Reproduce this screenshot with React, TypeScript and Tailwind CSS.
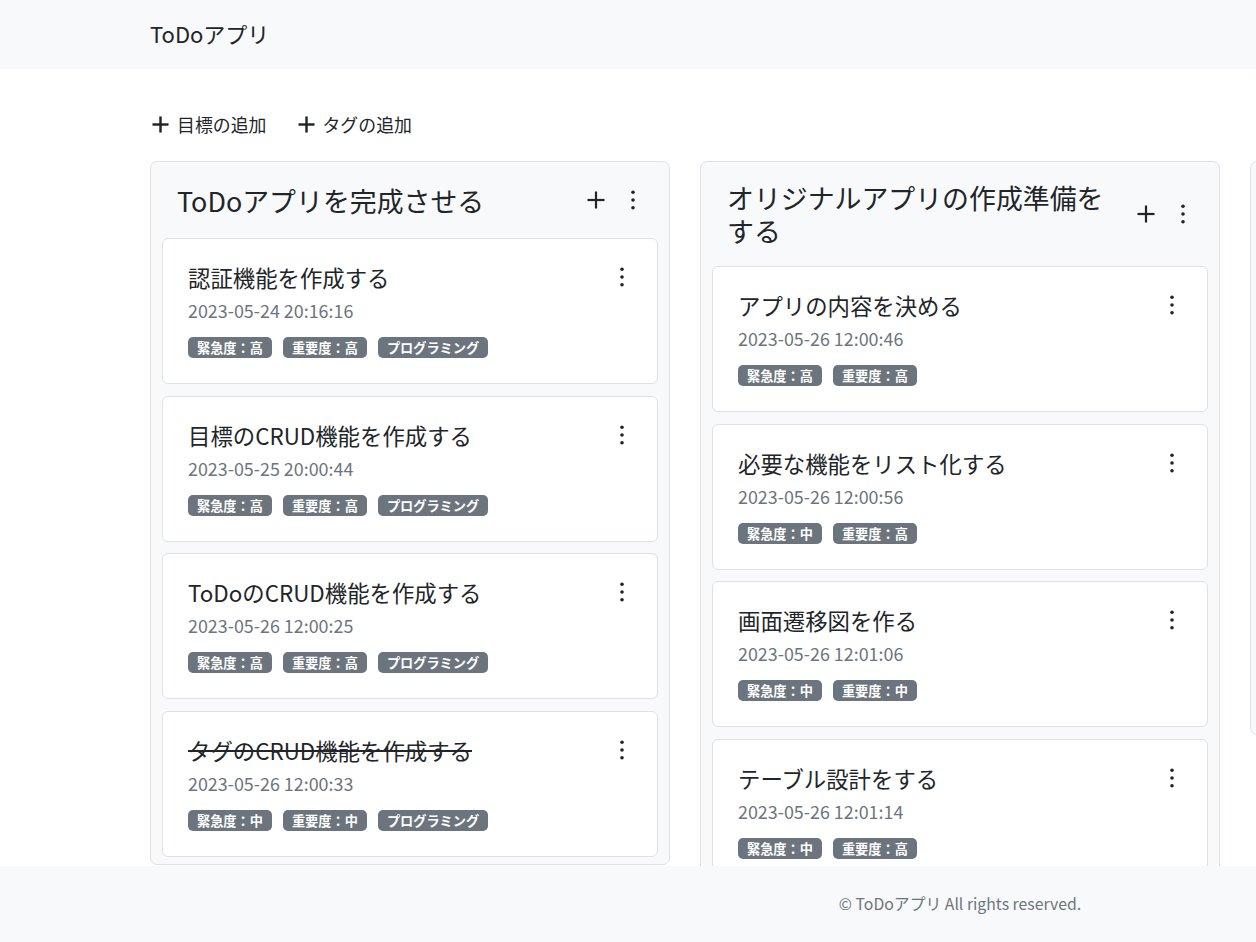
import React from "react";

type Task = { title: string; date: string; urgency: string; importance: string; tag?: string; done?: boolean };
type Goal = { title: string; tasks: Task[] };

const goals: Goal[] = [
  {
    title: "ToDoアプリを完成させる",
    tasks: [
      { title: "認証機能を作成する", date: "2023-05-24 20:16:16", urgency: "高", importance: "高", tag: "プログラミング" },
      { title: "目標のCRUD機能を作成する", date: "2023-05-25 20:00:44", urgency: "高", importance: "高", tag: "プログラミング" },
      { title: "ToDoのCRUD機能を作成する", date: "2023-05-26 12:00:25", urgency: "高", importance: "高", tag: "プログラミング" },
      { title: "タグのCRUD機能を作成する", date: "2023-05-26 12:00:33", urgency: "中", importance: "中", tag: "プログラミング", done: true },
    ],
  },
  {
    title: "オリジナルアプリの作成準備をする",
    tasks: [
      { title: "アプリの内容を決める", date: "2023-05-26 12:00:46", urgency: "高", importance: "高" },
      { title: "必要な機能をリスト化する", date: "2023-05-26 12:00:56", urgency: "中", importance: "高" },
      { title: "画面遷移図を作る", date: "2023-05-26 12:01:06", urgency: "中", importance: "中" },
      { title: "テーブル設計をする", date: "2023-05-26 12:01:14", urgency: "中", importance: "高" },
    ],
  },
  {
    title: "ポートフォリオサイトを公開する準備をする",
    tasks: [
      { title: "デザインを決める", date: "2023-05-26 12:01:30", urgency: "中", importance: "中" },
      { title: "サーバーを契約する", date: "2023-05-26 12:01:42", urgency: "低", importance: "中" },
      { title: "ドメインを取得する", date: "2023-05-26 12:01:55", urgency: "低", importance: "低" },
    ],
  },
];

function PlusIcon({ size = 18, stroke = 2.2 }: { size?: number; stroke?: number }) {
  return (
    <svg width={size} height={size} viewBox="0 0 18 18" fill="none" stroke="#212529" strokeWidth={stroke} strokeLinecap="butt">
      <line x1="9" y1="0.5" x2="9" y2="17.5" />
      <line x1="0.5" y1="9" x2="17.5" y2="9" />
    </svg>
  );
}

function KebabIcon() {
  return (
    <svg width="24" height="24" viewBox="0 0 24 24" fill="#212529">
      <circle cx="12" cy="4.3" r="1.8" />
      <circle cx="12" cy="12" r="1.8" />
      <circle cx="12" cy="19.7" r="1.8" />
    </svg>
  );
}

function Badge({ children }: { children: React.ReactNode }) {
  return (
    <span className="inline-flex h-[21px] items-center rounded-[5px] bg-[#6c757d] px-[9px] text-[13.2px] font-bold leading-[21px] text-white">
      {children}
    </span>
  );
}

function TaskCard({ task }: { task: Task }) {
  return (
    <div className="rounded-[6px] border border-[#dee2e6] bg-white pb-[25px] pl-[25px] pr-[24px] pt-[24px]">
      <div className="flex items-center justify-between">
        <div className={`text-[22.4px] leading-[28px] text-[#212529] ${task.done ? "line-through" : ""}`}>{task.title}</div>
        <button className="mr-[-1px] flex h-[28px] w-[24px] items-center justify-center">
          <KebabIcon />
        </button>
      </div>
      <div className="mt-[6px] text-[17.9px] leading-[26px] text-[#6c757d]">{task.date}</div>
      <div className="mt-[14px] flex gap-[11px]">
        <Badge>緊急度：{task.urgency}</Badge>
        <Badge>重要度：{task.importance}</Badge>
        {task.tag && <Badge>{task.tag}</Badge>}
      </div>
    </div>
  );
}

function GoalColumn({ goal }: { goal: Goal }) {
  return (
    <div className="w-[520px] shrink-0 rounded-[7px] border border-[#dee2e6] bg-[#f8f9fa] px-[11px] pb-[7px] pt-[19px]">
      <div className="flex items-center pl-[15px] pr-[13px]">
        <div className="mr-[20px] flex-1 text-[26.9px] leading-[33px] text-[#212529]">{goal.title}</div>
        <div className="flex h-[38px] items-center gap-[13px]">
          <button className="flex h-[38px] w-[24px] items-center justify-center">
            <PlusIcon size={18} stroke={2.2} />
          </button>
          <button className="flex h-[38px] w-[24px] items-center justify-center">
            <KebabIcon />
          </button>
        </div>
      </div>
      <div className="mt-[19px] flex flex-col gap-[11.5px]">
        {goal.tasks.map((t) => (
          <TaskCard key={t.title} task={t} />
        ))}
      </div>
    </div>
  );
}

export default function App() {
  return (
    <div className="relative h-[942px] w-full overflow-hidden bg-white font-['Noto_Sans_CJK_JP','Noto_Sans',sans-serif] text-[#212529]">
      <header className="flex h-[69px] items-center bg-[#f8f9fa] pb-[3px] pl-[150px]">
        <span className="text-[22px] leading-[30px] text-[#212529]">ToDoアプリ</span>
      </header>
      <main className="pl-[150px]">
        <div className="mt-[42px] flex h-[26px] items-center gap-[32px] pl-[2px]">
          <button className="flex items-center gap-[8px] text-[17.9px] leading-[26px]">
            <PlusIcon size={17} stroke={2.6} />
            <span>目標の追加</span>
          </button>
          <button className="flex items-center gap-[7px] text-[17.9px] leading-[26px]">
            <PlusIcon size={17} stroke={2.6} />
            <span>タグの追加</span>
          </button>
        </div>
        <div className="mt-[24px] flex items-start gap-[30px]">
          {goals.map((g) => (
            <GoalColumn key={g.title} goal={g} />
          ))}
        </div>
      </main>
      <footer className="absolute bottom-0 left-0 flex h-[76px] w-[1920px] items-center justify-center bg-[#f8f9fa] text-[15.8px] leading-[26px] text-[#6c757d]">
        © ToDoアプリ All rights reserved.
      </footer>
    </div>
  );
}
